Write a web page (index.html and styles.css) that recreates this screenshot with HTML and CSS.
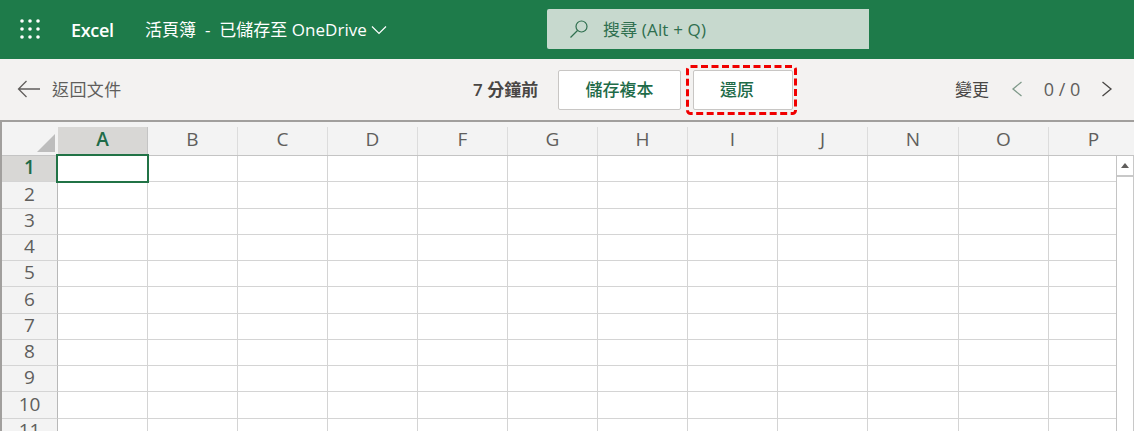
FILE: index.html
```html
<!DOCTYPE html>
<html lang="zh-Hant">
<head>
<meta charset="utf-8">
<title>Excel</title>
<link rel="stylesheet" href="styles.css">
</head>
<body>
<header class="appbar">
  <svg class="waffle" width="20" height="20" viewBox="0 0 20 20" fill="#fff"><circle cx="2" cy="2" r="1.8"/><circle cx="10" cy="2" r="1.8"/><circle cx="18" cy="2" r="1.8"/><circle cx="2" cy="10" r="1.8"/><circle cx="10" cy="10" r="1.8"/><circle cx="18" cy="10" r="1.8"/><circle cx="2" cy="18" r="1.8"/><circle cx="10" cy="18" r="1.8"/><circle cx="18" cy="18" r="1.8"/></svg>
  <span class="brand">Excel</span>
  <span class="doc">活頁簿 &nbsp;-&nbsp; 已儲存至 OneDrive</span>
  <svg class="chev" width="16" height="10" viewBox="0 0 16 10" fill="none" stroke="#fff" stroke-width="1.2"><path d="M1 1.5l7 7 7-7"/></svg>
  <div class="search">
    <svg width="20" height="20" viewBox="0 0 20 20" fill="none" stroke="#2f6f4f" stroke-width="1.2"><circle cx="12.5" cy="7.5" r="5.5"/><path d="M8.5 11.5L1.5 18.5"/></svg>
    <span class="search-text">搜尋 (Alt + Q)</span>
  </div>
</header>
<nav class="toolbar">
  <div class="back">
    <svg width="24" height="18" viewBox="0 0 24 18" fill="none" stroke="#605e5c" stroke-width="1.3"><path d="M23 9H1.5M9.5 1l-8 8 8 8"/></svg>
    <span class="back-text">返回文件</span>
  </div>
  <div class="center">
    <span class="time">7 分鐘前</span>
    <button class="btn btn-copy">儲存複本</button>
    <div class="restore-wrap">
      <button class="btn btn-restore">還原</button>
      <svg class="mark" width="111" height="50" viewBox="0 0 111 50" fill="none" stroke="#f00000" stroke-width="3" stroke-dasharray="7 3.5"><rect x="1.5" y="1.5" width="108" height="47" rx="3"/></svg>
    </div>
  </div>
  <div class="changes">
    <span class="changes-label">變更</span>
    <svg width="12" height="16" viewBox="0 0 12 16" fill="none" stroke="#7f9a8a" stroke-width="1.3"><path d="M10.5 1L2 8l8.5 7"/></svg>
    <span class="count">0 / 0</span>
    <svg width="12" height="16" viewBox="0 0 12 16" fill="none" stroke="#484644" stroke-width="1.3"><path d="M1.5 1L10 8l-8.5 7"/></svg>
  </div>
</nav>
<main class="sheet">
  <div class="col-head">
    <div class="corner"><i class="tri"></i></div>
    <div class="ch active">A</div><div class="ch">B</div><div class="ch">C</div><div class="ch">D</div><div class="ch">F</div><div class="ch">G</div><div class="ch">H</div><div class="ch">I</div><div class="ch">J</div><div class="ch">N</div><div class="ch">O</div><div class="ch">P</div>
  </div>
  <div class="body">
    <div class="rows">
      <div class="row"><div class="rh active">1</div><div class="c sel"></div><div class="c"></div><div class="c"></div><div class="c"></div><div class="c"></div><div class="c"></div><div class="c"></div><div class="c"></div><div class="c"></div><div class="c"></div><div class="c"></div><div class="c"></div></div>
      <div class="row tall"><div class="rh">2</div><div class="c"></div><div class="c"></div><div class="c"></div><div class="c"></div><div class="c"></div><div class="c"></div><div class="c"></div><div class="c"></div><div class="c"></div><div class="c"></div><div class="c"></div><div class="c"></div></div>
      <div class="row"><div class="rh">3</div><div class="c"></div><div class="c"></div><div class="c"></div><div class="c"></div><div class="c"></div><div class="c"></div><div class="c"></div><div class="c"></div><div class="c"></div><div class="c"></div><div class="c"></div><div class="c"></div></div>
      <div class="row"><div class="rh">4</div><div class="c"></div><div class="c"></div><div class="c"></div><div class="c"></div><div class="c"></div><div class="c"></div><div class="c"></div><div class="c"></div><div class="c"></div><div class="c"></div><div class="c"></div><div class="c"></div></div>
      <div class="row"><div class="rh">5</div><div class="c"></div><div class="c"></div><div class="c"></div><div class="c"></div><div class="c"></div><div class="c"></div><div class="c"></div><div class="c"></div><div class="c"></div><div class="c"></div><div class="c"></div><div class="c"></div></div>
      <div class="row tall"><div class="rh">6</div><div class="c"></div><div class="c"></div><div class="c"></div><div class="c"></div><div class="c"></div><div class="c"></div><div class="c"></div><div class="c"></div><div class="c"></div><div class="c"></div><div class="c"></div><div class="c"></div></div>
      <div class="row"><div class="rh">7</div><div class="c"></div><div class="c"></div><div class="c"></div><div class="c"></div><div class="c"></div><div class="c"></div><div class="c"></div><div class="c"></div><div class="c"></div><div class="c"></div><div class="c"></div><div class="c"></div></div>
      <div class="row"><div class="rh">8</div><div class="c"></div><div class="c"></div><div class="c"></div><div class="c"></div><div class="c"></div><div class="c"></div><div class="c"></div><div class="c"></div><div class="c"></div><div class="c"></div><div class="c"></div><div class="c"></div></div>
      <div class="row"><div class="rh">9</div><div class="c"></div><div class="c"></div><div class="c"></div><div class="c"></div><div class="c"></div><div class="c"></div><div class="c"></div><div class="c"></div><div class="c"></div><div class="c"></div><div class="c"></div><div class="c"></div></div>
      <div class="row tall"><div class="rh">10</div><div class="c"></div><div class="c"></div><div class="c"></div><div class="c"></div><div class="c"></div><div class="c"></div><div class="c"></div><div class="c"></div><div class="c"></div><div class="c"></div><div class="c"></div><div class="c"></div></div>
      <div class="row"><div class="rh">11</div><div class="c"></div><div class="c"></div><div class="c"></div><div class="c"></div><div class="c"></div><div class="c"></div><div class="c"></div><div class="c"></div><div class="c"></div><div class="c"></div><div class="c"></div><div class="c"></div></div>
    </div>
    <aside class="vscroll"><div class="up"><i class="up-arrow"></i></div></aside>
  </div>
</main>
</body>
</html>
```
FILE: styles.css
```css
*, *::before, *::after { box-sizing: border-box; }
html, body { margin: 0; height: 431px; overflow: hidden; }
body {
  width: 1134px;
  font-family: "Open Sans", "Noto Sans CJK TC", sans-serif;
  background: #fff;
  display: flex;
  flex-direction: column;
}
.appbar {
  height: 59px;
  flex: none;
  background: #1e7b4a;
  color: #fff;
  display: flex;
  align-items: center;
  padding-left: 20px;
}
.waffle { margin-bottom: 1px; }
.brand { font-size: 18px; font-weight: 600; margin-left: 31px; letter-spacing: -0.3px; width: 45px; }
.doc { font-size: 17px; margin-left: 29px; padding-bottom: 2px; white-space: nowrap; width: 226px; letter-spacing: 0.02px; }
.chev { margin-left: 0; }
.search {
  margin-left: 160px;
  margin-bottom: 1px;
  width: 322px;
  height: 40px;
  background: #c7d9ce;
  border-radius: 2px 0 0 2px;
  color: #2f6f4f;
  font-size: 17px;
  display: flex;
  align-items: center;
  gap: 14px;
  padding-left: 22px;
}
.search-text { padding-bottom: 1px; letter-spacing: 0.15px; }
.toolbar {
  height: 61px;
  flex: none;
  background: #f3f2f1;
  display: flex;
  align-items: center;
  color: #484644;
  font-size: 17px;
}
.back { display: flex; align-items: center; gap: 11px; padding-left: 17px; padding-bottom: 2px; width: 470px; color: #605e5c; }
.back-text { letter-spacing: 0.4px; }
.center { display: flex; align-items: center; width: 460px; }
.time { font-weight: 600; font-size: 17px; width: 88px; padding-left: 3px; padding-bottom: 2px; white-space: nowrap; color: #484644; }
.btn {
  height: 40px;
  background: #fff;
  border: 1px solid #c8c6c4;
  border-radius: 2px;
  font: 500 17px "Open Sans", "Noto Sans CJK TC", sans-serif;
  color: #1e6b48;
  padding: 0 0 2px;
}
.btn-copy { width: 123px; }
.restore-wrap { position: relative; margin-left: 12px; display: flex; }
.btn-restore { width: 100px; padding-right: 12px; }
.mark { position: absolute; left: -7px; top: -5px; pointer-events: none; }
.changes { display: flex; align-items: center; margin-left: 25px; padding-bottom: 2px; }
.changes-label { font-size: 17px; width: 56px; white-space: nowrap; }
.count { width: 62px; margin-left: 8px; margin-right: 8px; font-size: 18px; color: #605e5c; white-space: nowrap; text-align: center; }
.sheet {
  flex: 1;
  min-height: 0;
  border-top: 2px solid #a19f9d;
  border-left: 2px solid #a19f9d;
  background: #f3f3f3;
  display: flex;
  flex-direction: column;
  overflow: hidden;
}
.col-head {
  height: 34px;
  flex: none;
  display: flex;
  padding-top: 5px;
  border-bottom: 1px solid #c4c4c4;
  font-size: 19px;
  color: #605e5c;
}
.corner { width: 56px; flex: none; position: relative; }
.tri {
  position: absolute;
  right: 3px;
  bottom: 3px;
  width: 18px;
  height: 18px;
  background: #bdbdbd;
  clip-path: polygon(100% 0, 100% 100%, 0 100%);
}
.ch {
  width: 90px;
  flex: none;
  border-right: 1px solid #dcdcdc;
  text-align: center;
  line-height: 24px;
}
.ch:nth-child(11) { width: 91px; }
.ch.active { background: #d8d7d5; color: #1e6b48; font-weight: 600; border-right-color: #c4c4c4; }
.body { flex: 1; min-height: 0; display: flex; position: relative; overflow: visible; }
.rows { width: 1115px; flex: none; overflow: hidden; border-right: 1px solid #c4c4c4; padding-top: 0; }
.row { height: 26px; display: flex; }
.row.tall { height: 27px; }
.rh {
  width: 56px;
  flex: none;
  background: #f3f3f3;
  border-right: 1px solid #b8b8b8;
  border-bottom: 1px solid #d4d4d4;
  text-align: center;
  font-size: 19px;
  line-height: 22px;
  color: #605e5c;
}
.row.tall .rh { line-height: 24px; }
.rh.active { background: #d8d7d5; color: #1e6b48; font-weight: 600; }
.c {
  width: 90px;
  flex: none;
  background: #fff;
  border-right: 1px solid #d4d4d4;
  border-bottom: 1px solid #d4d4d4;
}
.c:nth-child(11) { width: 91px; }
.sel::after {
  content: "";
  position: absolute;
  left: 54px;
  top: -2px;
  width: 93px;
  height: 29px;
  border: 2px solid #217346;
}
.vscroll { flex: 1; background: #fff; border-right: 1px solid #c8c8c8; }
.up {
  height: 21px;
  border-bottom: 2px solid #c8c8c8;
  display: flex;
  align-items: center;
  justify-content: center;
  background: #fff;
}
.up-arrow {
  width: 0;
  height: 0;
  border-left: 4.5px solid transparent;
  border-right: 4.5px solid transparent;
  border-bottom: 5px solid #605e5c;
}
```
